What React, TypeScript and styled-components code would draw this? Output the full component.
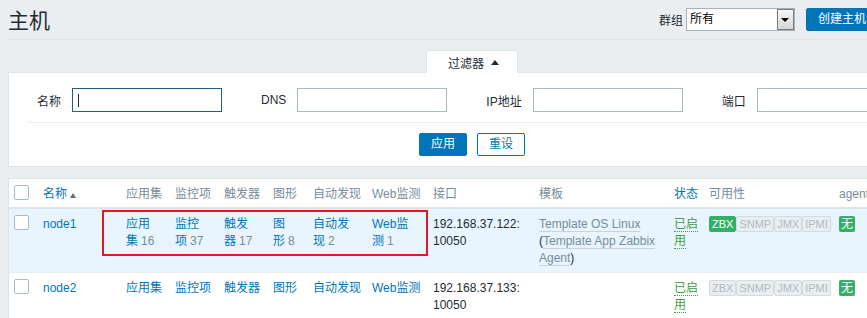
import React from 'react'
import styled, { createGlobalStyle } from 'styled-components'

const GlobalStyle = createGlobalStyle`
  html, body {
    margin: 0;
    background: #ebeef0;
    overflow: hidden;
  }
  body {
    font-family: 'Liberation Sans', Arial, 'Noto Sans CJK SC', sans-serif;
    font-size: 12px;
    color: #1f2c33;
  }
`

const Page = styled.div`
  width: 928px;
  padding: 8px 0 0 8px;
`

const Header = styled.div`
  display: flex;
  align-items: center;
  justify-content: space-between;
  height: 23px;
  padding-bottom: 8px;
  border-bottom: 1px solid #dfe4e7;
`

const Title = styled.h1`
  margin: 0;
  padding-top: 2px;
  font-size: 21px;
  font-weight: normal;
  line-height: 23px;
  color: #1f2c33;
`

const Controls = styled.div`
  display: flex;
  align-items: center;
`

const ControlLabel = styled.span`
  margin-right: 3px;
  font-size: 12px;
`

const Select = styled.div`
  display: flex;
  width: 109px;
  height: 23px;
  box-sizing: border-box;
  border: 1px solid #a5b1b8;
  background: #fff;
  margin-right: 11px;
`

const SelectValue = styled.span`
  flex: 1;
  padding-left: 3px;
  line-height: 21px;
  color: #000;
`

const SelectArrow = styled.span`
  width: 17px;
  box-sizing: border-box;
  border: 1px solid #7d7d7d;
  background: linear-gradient(#f6f6f6, #d6d6d6);
  display: flex;
  align-items: center;
  justify-content: center;

  &::after {
    content: '';
    border-left: 4px solid transparent;
    border-right: 4px solid transparent;
    border-top: 4px solid #000;
  }
`

const Button = styled.button<{ $outline?: boolean }>`
  height: 23px;
  padding: 0 11px;
  border: 1px solid #0275b8;
  border-radius: 2px;
  background: ${p => (p.$outline ? '#fff' : '#0275b8')};
  color: ${p => (p.$outline ? '#0275b8' : '#fff')};
  font-family: inherit;
  font-size: 12px;
  line-height: 21px;
  cursor: pointer;

  & + & {
    margin-left: 10px;
  }
`

const FilterWrap = styled.div`
  margin-top: 10px;
`

const FilterTab = styled.div`
  width: 92px;
  height: 23px;
  box-sizing: border-box;
  margin: 0 auto -1px;
  padding-left: 3px;
  position: relative;
  background: #fff;
  border: 1px solid #dfe4e7;
  border-bottom: none;
  display: flex;
  align-items: center;
  justify-content: center;
  gap: 7px;
`

const TriangleUp = styled.span<{ $color?: string; $w?: number }>`
  display: inline-block;
  width: 0;
  height: 0;
  border-left: ${p => p.$w ?? 4}px solid transparent;
  border-right: ${p => p.$w ?? 4}px solid transparent;
  border-bottom: 5px solid ${p => p.$color ?? '#1f2c33'};
`

const FilterPanel = styled.div`
  background: #fff;
  border: 1px solid #dfe4e7;
  padding: 0 19px 10px;
`

const FilterRow = styled.div`
  display: flex;
  gap: 39px;
  padding: 15px 0 10px 9px;
  border-bottom: 1px solid #ebeef0;
`

const FilterGroup = styled.div`
  display: flex;
  align-items: center;
  gap: 11px;
`

const Field = styled.div<{ $focused?: boolean }>`
  width: 150px;
  height: 24px;
  box-sizing: border-box;
  border: 1px solid ${p => (p.$focused ? '#1b5f8e' : '#acbbc2')};
  background: #fff;
  display: flex;
  align-items: center;
  padding-left: 5px;
`

const Caret = styled.span`
  width: 1px;
  height: 13px;
  background: #1f2c33;
`

const FilterActions = styled.div`
  display: flex;
  justify-content: center;
  padding-top: 10px;
`

const TableWrap = styled.div`
  position: relative;
  margin-top: 11px;
  background: #fff;
  border: 1px solid #dfe4e7;
`

const Table = styled.table`
  width: 100%;
  table-layout: fixed;
  border-collapse: collapse;
`

const Th = styled.th<{ $link?: boolean }>`
  padding: 7px 5px 5px;
  line-height: 16px;
  text-align: left;
  font-weight: normal;
  white-space: nowrap;
  color: ${p => (p.$link ? '#0275b8' : '#768d99')};
  border-bottom: 2px solid #dfe4e7;
  vertical-align: top;
`

const Tr = styled.tr<{ $hl?: boolean }>`
  background: ${p => (p.$hl ? '#e8f5ff' : '#fff')};
`

const Td = styled.td`
  padding: 7px 5px 5px;
  line-height: 17px;
  vertical-align: top;
  border-bottom: 1px solid #ebeef0;
  white-space: normal;
`

const Checkbox = styled.span`
  display: block;
  width: 15px;
  height: 15px;
  margin-top: -1px;
  box-sizing: border-box;
  border: 1px solid #acbbc2;
  border-radius: 2px;
  background: #fff;
`

const Link = styled.a`
  color: #0275b8;
  text-decoration: none;
`

const Count = styled.span`
  color: #768d99;
  margin-left: 3px;
`

const TplLink = styled.a`
  color: #768d99;
  text-decoration: none;
  border-bottom: 1px solid #c9d3d8;
`

const Status = styled.span`
  color: #429e47;
  border-bottom: 1px dotted #429e47;
`

const Badges = styled.div`
  display: flex;
`

const Badge = styled.span<{ $on?: boolean }>`
  height: 16px;
  box-sizing: border-box;
  padding: 0 2px;
  font-size: 11px;
  line-height: 14px;
  border: 1px solid ${p => (p.$on ? '#34af67' : '#d4dbdf')};
  background: ${p => (p.$on ? '#34af67' : '#ebeef0')};
  color: ${p => (p.$on ? '#fff' : '#acbbc2')};
  border-radius: 2px;
`

const NoneBadge = styled.span`
  display: inline-block;
  height: 16px;
  padding: 0 2px;
  line-height: 16px;
  background: #34af67;
  color: #fff;
  border-radius: 2px;
`

const Highlight = styled.div`
  position: absolute;
  left: 93px;
  top: 31px;
  width: 326px;
  height: 46px;
  box-sizing: border-box;
  border: 2px solid #e5161f;
  pointer-events: none;
`

const widths = [29, 83, 49, 49, 49, 40, 59, 61, 106, 135, 35, 130, 70, 61]
const linkCols = ['应用集', '监控项', '触发器', '图形', '自动发现', 'Web监测']

type Row = {
  name: string
  counts?: { head: string; tail: string; n: number }[]
  ip: string
  templates: boolean
  zbx: boolean
  hl?: boolean
}

const rows: Row[] = [
  {
    name: 'node1',
    counts: [
      { head: '应用', tail: '集', n: 16 },
      { head: '监控', tail: '项', n: 37 },
      { head: '触发', tail: '器', n: 17 },
      { head: '图', tail: '形', n: 8 },
      { head: '自动发', tail: '现', n: 2 },
      { head: 'Web监', tail: '测', n: 1 }
    ],
    ip: '192.168.37.122:',
    templates: true,
    zbx: true,
    hl: true
  },
  { name: 'node2', ip: '192.168.37.133:', templates: false, zbx: false }
]

function App() {
  return (
    <>
      <GlobalStyle />
      <Page>
        <Header>
          <Title>主机</Title>
          <Controls>
            <ControlLabel>群组</ControlLabel>
            <Select>
              <SelectValue>所有</SelectValue>
              <SelectArrow />
            </Select>
            <Button>创建主机</Button>
            <Button>导入</Button>
          </Controls>
        </Header>

        <FilterWrap>
          <FilterTab>
            过滤器 <TriangleUp />
          </FilterTab>
          <FilterPanel>
            <FilterRow>
              <FilterGroup>
                名称
                <Field $focused>
                  <Caret />
                </Field>
              </FilterGroup>
              <FilterGroup>
                DNS
                <Field />
              </FilterGroup>
              <FilterGroup>
                IP地址
                <Field />
              </FilterGroup>
              <FilterGroup>
                端口
                <Field />
              </FilterGroup>
            </FilterRow>
            <FilterActions>
              <Button>应用</Button>
              <Button $outline>重设</Button>
            </FilterActions>
          </FilterPanel>
        </FilterWrap>

        <TableWrap>
          <Table>
            <colgroup>
              {widths.map((w, i) => (
                <col key={i} style={{ width: w }} />
              ))}
            </colgroup>
            <thead>
              <tr>
                <Th>
                  <Checkbox />
                </Th>
                <Th $link>
                  名称 <TriangleUp $color='#5f6f77' $w={3.5} />
                </Th>
                {linkCols.map(c => (
                  <Th key={c}>{c}</Th>
                ))}
                <Th>接口</Th>
                <Th>模板</Th>
                <Th $link>状态</Th>
                <Th>可用性</Th>
                <Th>agent加密</Th>
                <Th>信息</Th>
              </tr>
            </thead>
            <tbody>
              {rows.map(r => (
                <Tr key={r.name} $hl={r.hl}>
                  <Td>
                    <Checkbox />
                  </Td>
                  <Td>
                    <Link>{r.name}</Link>
                  </Td>
                  {linkCols.map((c, i) => (
                    <Td key={c}>
                      {r.counts ? (
                        <>
                          <Link>{r.counts[i].head}</Link>
                          <br />
                          <Link>{r.counts[i].tail}</Link>
                          <Count>{r.counts[i].n}</Count>
                        </>
                      ) : (
                        <Link>{c}</Link>
                      )}
                    </Td>
                  ))}
                  <Td>
                    {r.ip}
                    <br />
                    10050
                  </Td>
                  <Td>
                    {r.templates && (
                      <>
                        <TplLink>Template OS Linux</TplLink> (<TplLink>Template App Zabbix Agent</TplLink>)
                      </>
                    )}
                  </Td>
                  <Td>
                    <Status>已启用</Status>
                  </Td>
                  <Td>
                    <Badges>
                      <Badge $on={r.zbx}>ZBX</Badge>
                      <Badge>SNMP</Badge>
                      <Badge>JMX</Badge>
                      <Badge>IPMI</Badge>
                    </Badges>
                  </Td>
                  <Td>
                    <NoneBadge>无</NoneBadge>
                  </Td>
                  <Td />
                </Tr>
              ))}
            </tbody>
          </Table>
          <Highlight />
        </TableWrap>
      </Page>
    </>
  )
}

export default App
